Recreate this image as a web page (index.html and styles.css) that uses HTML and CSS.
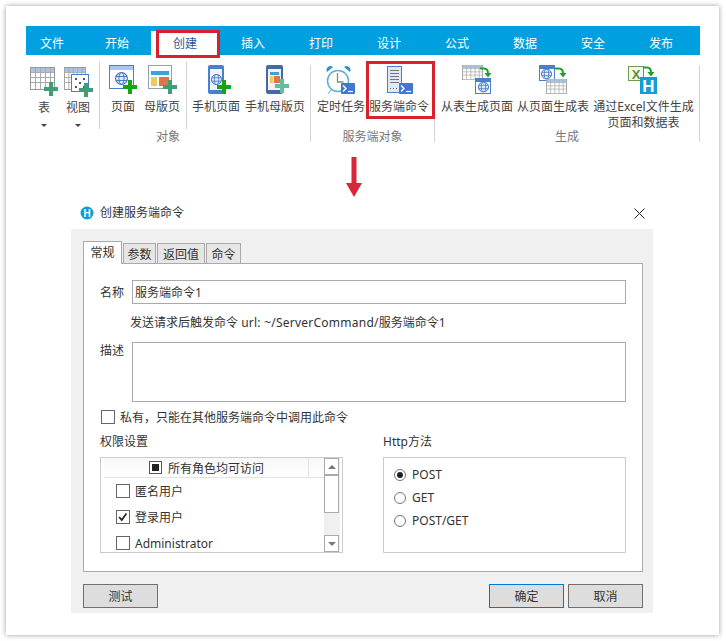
FILE: index.html
```html
<!DOCTYPE html>
<html lang="zh">
<head>
<meta charset="utf-8">
<title>创建服务端命令</title>
<link rel="stylesheet" href="styles.css">
</head>
<body>
<svg class="defs" aria-hidden="true">
  <symbol id="tbl" viewBox="0 0 25 23" preserveAspectRatio="none">
    <rect x=".5" y=".5" width="24" height="22" fill="#fff" stroke="#999"/>
    <rect x="1" y="1" width="23" height="4" fill="#a9c2ea"/>
    <path d="M1 5.500h23M1 10.500h23M1 15.500h23M5.500 1v21M10.500 1v21M15.500 1v21M20.500 1v21" stroke="#aaa" fill="none"/>
  </symbol>
  <symbol id="glob" viewBox="0 0 14 14">
    <circle cx="7" cy="7" r="6.400" fill="#dfe9f9" stroke="#3f73c4" stroke-width="1.200"/>
    <ellipse cx="7" cy="7" rx="2.800" ry="6.400" fill="none" stroke="#3f73c4"/>
    <path d="M1 4.800h12M1 9.200h12" stroke="#3f73c4" fill="none"/>
  </symbol>
  <symbol id="plus" viewBox="0 0 14 14">
    <path d="M5 0h4v5h5v4H9v5H5V9H0V5h5z" fill="currentColor"/>
  </symbol>
  <symbol id="term" viewBox="0 0 14 11">
    <rect width="14" height="11" rx="1" fill="#3f78d2"/>
    <path d="M2 2.500l3 3-3 3" stroke="#fff" stroke-width="1.400" fill="none"/>
    <path d="M7 8.500h5" stroke="#fff" stroke-width="1.200"/>
  </symbol>
</svg>
<main class="frame">
  <section class="ribbon">
    <nav class="tabbar">
      <span class="rtab rtab-first">文件</span>
      <span class="rtab rtab-second">开始</span>
      <span class="rtab rtab-active">创建</span>
      <span class="rtab">插入</span>
      <span class="rtab">打印</span>
      <span class="rtab">设计</span>
      <span class="rtab">公式</span>
      <span class="rtab">数据</span>
      <span class="rtab">安全</span>
      <span class="rtab">发布</span>
    </nav>
    <div class="rbody">
      <div class="group group-a">
        <div class="grow">
          <div class="cluster c-1">
            <div class="item w-36">
              <svg class="ico" viewBox="26 63 36 34" width="36" height="34"><use href="#tbl" x="30" y="67" width="25" height="23"/><use href="#plus" class="p-dark" x="44" y="82" width="14" height="14"/></svg>
              <span class="lbl lbl-low">表</span><i class="caret"></i>
            </div>
            <div class="item w-32">
              <svg class="ico" viewBox="62 63 32 34" width="32" height="34"><use href="#tbl" x="64" y="67" width="22" height="23"/><rect x="71.500" y="74.500" width="17" height="17" fill="#fff" stroke="#4a7fd0"/><path d="M75 78h2v2h-2zM83 78h2v2h-2zM79 82h2v2h-2zM75 86h2v2h-2zM83 86h2v2h-2z" fill="#555"/><use href="#plus" class="p-dark" x="79" y="83" width="14" height="14"/></svg>
              <span class="lbl lbl-low">视图</span><i class="caret"></i>
            </div>
          </div>
          <div class="cluster c-2">
            <div class="item w-46">
              <svg class="ico" viewBox="100 63 46 34" width="46" height="34"><rect x="109.500" y="65.500" width="24" height="23" fill="#fff" stroke="#4a7fd0"/><rect x="110" y="66" width="23" height="4" fill="#a9c6f2"/><use href="#glob" x="115" y="72" width="13" height="13"/><use href="#plus" class="p-bright" x="123" y="80" width="14" height="14"/></svg>
              <span class="lbl">页面</span>
            </div>
            <div class="item w-32">
              <svg class="ico" viewBox="146 63 32 34" width="32" height="34"><rect x="148.500" y="65.500" width="23" height="23" fill="#fff" stroke="#8fa3b8"/><rect x="151" y="71" width="18" height="4" fill="#3aa3dc"/><rect x="151" y="77" width="6" height="9" fill="#f2c95e"/><rect x="159" y="77" width="10" height="9" fill="#e0744a"/><use href="#plus" class="p-dark" x="163" y="80" width="14" height="14"/></svg>
              <span class="lbl">母版页</span>
            </div>
          </div>
          <div class="cluster c-3">
            <div class="item w-58">
              <svg class="ico" viewBox="187 63 58 34" width="58" height="34"><rect x="208" y="65" width="16" height="29" rx="2" fill="#4a7fd0"/><rect x="210" y="69" width="12" height="21" fill="#eef3fb"/><use href="#glob" x="211" y="74" width="11" height="11"/><use href="#plus" class="p-bright" x="217" y="80" width="14" height="14"/></svg>
              <span class="lbl">手机页面</span>
            </div>
            <div class="item w-60">
              <svg class="ico" viewBox="245 63 60 34" width="60" height="34"><rect x="266" y="65" width="17" height="29" rx="2" fill="#4668a8"/><rect x="268" y="69" width="13" height="21" fill="#f3f3f3"/><rect x="270" y="72" width="9" height="3" fill="#3aa3dc"/><rect x="270" y="76" width="3" height="7" fill="#f2c95e"/><rect x="274" y="76" width="6" height="7" fill="#e0744a"/><use href="#plus" class="p-light" x="275" y="79" width="14" height="14"/></svg>
              <span class="lbl">手机母版页</span>
            </div>
          </div>
        </div>
        <div class="gname">对象</div>
      </div>
      <i class="sep"></i>
      <div class="group group-b">
        <div class="grow grow-b">
          <div class="item w-48">
            <svg class="ico" viewBox="317 63 48 34" width="48" height="34"><path d="M327 72a4 4 0 0 1 6-5zM344 67a4 4 0 0 1 6 5z" fill="#2c94c4"/><path d="M331 90l-3 4M345 90l3 4" stroke="#7dbcd8" stroke-width="1.200"/><circle cx="338" cy="81" r="10.500" fill="#fff" stroke="#5eb0d2" stroke-width="1.500"/><path d="M337.500 73v9h6" stroke="#888" stroke-width="1.300" fill="none"/><use href="#term" x="341" y="83" width="14" height="11"/></svg>
            <span class="lbl">定时任务</span>
          </div>
          <div class="item w-60">
            <svg class="ico" viewBox="369 63 60 34" width="60" height="34"><rect x="387.500" y="66.500" width="14" height="26" fill="#dfe8f6" stroke="#4a7fd0"/><path d="M390 70.500h9M390 73.500h9M390 76.500h9M390 79.500h9M390 82.500h9" stroke="#777" fill="none"/><path d="M390 88h1v1h-1zM393 88h1v1h-1zM396 88h1v1h-1z" fill="#666"/><use href="#term" x="399" y="83" width="14" height="11"/></svg>
            <span class="lbl">服务端命令</span>
          </div>
        </div>
        <div class="gname">服务端对象</div>
      </div>
      <i class="sep"></i>
      <div class="group group-c">
        <div class="grow grow-c">
          <div class="item w-72">
            <svg class="ico" viewBox="441 63 72 34" width="72" height="34"><use href="#tbl" x="462" y="65" width="21" height="15"/><path d="M480 68.500h4q4 0 4 5" stroke="#1f9f2a" stroke-width="2" fill="none"/><path d="M484.500 73h7l-3.500 4.500z" fill="#1f9f2a"/><rect x="475" y="78" width="16" height="16" fill="#4a7fd0"/><rect x="476" y="82" width="14" height="11" fill="#fff"/><use href="#glob" x="478" y="81.500" width="11" height="11"/></svg>
            <span class="lbl">从表生成页面</span>
          </div>
          <div class="item w-72">
            <svg class="ico" viewBox="517 63 72 34" width="72" height="34"><rect x="539" y="65" width="16" height="16" fill="#4a7fd0"/><rect x="540" y="69" width="14" height="11" fill="#fff"/><use href="#glob" x="541" y="68.500" width="11" height="11"/><path d="M555 68.500h4q4 0 4 5" stroke="#1f9f2a" stroke-width="2" fill="none"/><path d="M559.500 73h7l-3.500 4.500z" fill="#1f9f2a"/><use href="#tbl" x="546" y="79" width="21" height="15"/></svg>
            <span class="lbl">从页面生成表</span>
          </div>
          <div class="item w-101">
            <svg class="ico" viewBox="593 63 101 34" width="101" height="34"><rect x="628.500" y="66.500" width="15" height="14" fill="#f3f8ee" stroke="#6d9a50"/><text x="636" y="78.500" class="sx">X</text><path d="M643 67.500h4q4 0 4 5" stroke="#1f9f2a" stroke-width="2" fill="none"/><path d="M647.500 72h7l-3.500 4.500z" fill="#1f9f2a"/><rect x="640" y="77" width="17" height="17" fill="#129cdc"/><text x="648.500" y="92" class="sh">H</text></svg>
            <span class="lbl">通过Excel文件生成<br>页面和数据表</span>
          </div>
        </div>
        <div class="gname">生成</div>
      </div>
      <i class="sep"></i>
    </div>
    <div class="callout callout-tab"></div>
    <div class="callout callout-cmd"></div>
  </section>

  <svg class="down" viewBox="0 0 18 41" width="18" height="41"><path d="M6.500 0h5v26H17L9 40 1 26h5.500z" fill="#d8263a"/></svg>

  <section class="dialog">
    <header class="dtitle">
      <svg class="dlogo" viewBox="0 0 14 14" width="14" height="14"><circle cx="7" cy="7" r="6.500" fill="#119bd8"/><text x="7" y="10.500" class="logo-h">H</text></svg>
      <span class="dtext">创建服务端命令</span>
      <svg class="dclose" viewBox="0 0 11 11" width="11" height="11"><path d="M.5.500l10 10M10.500.500l-10 10" stroke="#222" fill="none"/></svg>
    </header>
    <div class="dbody">
      <div class="dtabs">
        <span class="dtab dtab-on">常规</span>
        <span class="dtab w-tab2">参数</span>
        <span class="dtab w-tab3">返回值</span>
        <span class="dtab w-tab4">命令</span>
      </div>
      <div class="panel">
        <div class="frow r-name">
          <label class="flabel">名称</label>
          <div class="input">服务端命令1</div>
        </div>
        <div class="hint">发送请求后触发命令 <span class="latin">url: ~/ServerCommand/</span>服务端命令1</div>
        <div class="frow r-desc">
          <label class="flabel">描述</label>
          <div class="input area"></div>
        </div>
        <div class="private"><i class="cb"></i><span class="tx">私有，只能在其他服务端命令中调用此命令</span></div>
        <div class="cols">
          <div class="col">
            <div class="coltitle">权限设置</div>
            <div class="listbox">
              <div class="listmain">
                <div class="lhead"><i class="cb cb-mixed"></i><span class="tx">所有角色均可访问</span></div>
                <div class="lrow"><i class="cb"></i><span class="tx">匿名用户</span></div>
                <div class="lrow"><i class="cb"><svg viewBox="0 0 14 14" width="12" height="12"><path d="M2.500 7l3 3.500L11 3" stroke="#222" stroke-width="2" fill="none"/></svg></i><span class="tx">登录用户</span></div>
                <div class="lrow"><i class="cb"></i><span class="tx">Administrator</span></div>
              </div>
              <div class="sbar">
                <div class="sbtn"><i class="tri tri-up"></i></div>
                <div class="sthumb"></div>
                <div class="sspace"></div>
                <div class="sbtn"><i class="tri tri-down"></i></div>
              </div>
            </div>
          </div>
          <div class="col">
            <div class="coltitle">Http方法</div>
            <div class="radiobox">
              <div class="radio"><i class="rd rd-on"></i><span>POST</span></div>
              <div class="radio"><i class="rd"></i><span>GET</span></div>
              <div class="radio"><i class="rd"></i><span>POST/GET</span></div>
            </div>
          </div>
        </div>
      </div>
      <div class="actions">
        <button class="btn">测试</button>
        <span class="spacer"></span>
        <button class="btn btn-primary">确定</button>
        <button class="btn">取消</button>
      </div>
    </div>
  </section>
</main>
</body>
</html>
```
FILE: styles.css
```css
* { box-sizing: border-box; }
html, body { margin: 0; padding: 0; background: #fff; }
body {
  width: 726px;
  height: 641px;
  overflow: hidden;
  font-family: "Noto Sans", "Noto Sans CJK SC", sans-serif;
  font-size: 12px;
  line-height: 16px;
  color: #333;
}
.defs { position: absolute; width: 0; height: 0; }
.frame {
  margin: 6px;
  width: 713px;
  height: 629px;
  padding: 20px;
  background: #fff;
  box-shadow: 0 0 5px rgba(0, 0, 0, .4);
}

/* ribbon */
.ribbon { position: relative; width: 674px; height: 117px; }
.tabbar { display: flex; height: 29px; background: #009fdf; }
.rtab {
  width: 68px;
  padding-top: 6px;
  line-height: 23px;
  text-align: center;
  color: #fff;
}
.rtab-first { width: 52px; }
.rtab-second { width: 73px; padding-left: 5px; }
.rtab-active {
  margin-top: 5px;
  padding-top: 1px;
  background: #fff;
  color: #2f5597;
}
.rbody { display: flex; height: 88px; color: #444; }
.group { display: flex; flex-direction: column; }
.group-a { width: 284px; }
.group-b { width: 123px; }
.group-c { width: 264px; }
.sep {
  flex: none;
  width: 1px;
  height: 77px;
  margin-top: 10px;
  background: #d4d4d4;
}
.grow { flex: none; display: flex; height: 67px; margin-top: 7px; padding-top: 1px; }
.grow-b, .grow-c { padding-left: 6px; gap: 4px; }
.cluster { display: flex; margin-top: -1px; padding-top: 1px; }
.c-1 { width: 73px; }
.c-2 { width: 87px; border-left: 1px solid #d4d4d4; }
.c-3 { width: 124px; border-left: 1px solid #d4d4d4; }
.item { display: flex; flex-direction: column; align-items: center; white-space: nowrap; text-align: center; }
.w-32 { width: 32px; }
.w-36 { width: 36px; }
.w-46 { width: 46px; }
.w-48 { width: 48px; }
.w-58 { width: 58px; }
.w-60 { width: 60px; }
.w-72 { width: 72px; }
.w-101 { width: 101px; }
.ico { display: block; flex: none; }
.lbl { margin-top: 2px; }
.lbl-low { margin-top: 3px; }
.caret {
  width: 0;
  height: 0;
  margin-top: 8px;
  border-left: 3px solid transparent;
  border-right: 3px solid transparent;
  border-top: 3px solid #444;
}
.gname { flex: none; height: 16px; text-align: center; color: #777; }
.p-dark { color: #3f9d78; }
.p-bright { color: #16a516; }
.p-light { color: #62bf9c; }
.sx { font: bold 13px "Liberation Sans", sans-serif; fill: #5f8f3c; text-anchor: middle; }
.sh { font: bold 17px "Liberation Sans", sans-serif; fill: #fff; text-anchor: middle; }
.logo-h { font: bold 10px "Liberation Sans", sans-serif; fill: #fff; text-anchor: middle; }
.callout { position: absolute; border: 3px solid #d8202f; }
.callout-tab { left: 130px; top: 4px; width: 64px; height: 28px; }
.callout-cmd { left: 340px; top: 35px; width: 69px; height: 58px; }

.down { display: block; margin: 14px 0 7px 319px; }

/* dialog */
.dialog { margin-left: 45px; width: 582px; }
.dtitle { display: flex; align-items: center; height: 24px; padding: 0 8px 8px 9px; }
.dlogo { flex: none; }
.dtext { margin-left: 6px; color: #333; }
.dclose { margin-left: auto; }
.dbody { height: 384px; padding: 12px 10px 0 12px; background: #f0f0f0; }
.dtabs { display: flex; align-items: flex-end; height: 22px; gap: 1px; }
.dtab {
  height: 20px;
  line-height: 21px;
  text-align: center;
  background: #e6e6e6;
  border: 1px solid #aaa;
  border-bottom: 0;
}
.dtab-on {
  width: 39px;
  height: 23px;
  line-height: 22px;
  margin-bottom: -1px;
  position: relative;
  background: #fff;
}
.w-tab2 { width: 33px; }
.w-tab3 { width: 48px; }
.w-tab4 { width: 35px; }
.panel {
  width: 560px;
  height: 309px;
  background: #fff;
  border: 1px solid #aaa;
}
.frow { display: flex; padding-left: 16px; }
.r-name { margin-top: 16px; align-items: center; }
.r-desc { margin-top: 11px; }
.flabel { width: 32px; padding-top: 1px; color: #333; }
.r-name .flabel { padding-top: 2px; }
.input {
  width: 494px;
  height: 24px;
  padding: 0 2px;
  line-height: 24px;
  border: 1px solid #aaa;
  background: #fff;
}
.area { height: 60px; }
.hint { margin-top: 11px; padding-left: 46px; }
.latin { letter-spacing: .24px; }
.private { display: flex; align-items: center; gap: 5px; margin-top: 7px; padding-left: 17px; height: 16px; }
.tx { padding-top: 2px; }
.cb {
  flex: none;
  display: flex;
  align-items: center;
  justify-content: center;
  width: 14px;
  height: 14px;
  border: 1px solid #666;
  background: #fff;
}
.cb-mixed { width: 13px; height: 13px; border-color: #555; }
.cb-mixed::before { content: ""; width: 7px; height: 7px; background: #222; }
.cols { display: flex; gap: 40px; margin-top: 8px; padding-left: 16px; }
.col { width: 243px; }
.coltitle { height: 17px; padding-top: 1px; margin-bottom: 7px; }
.listbox {
  display: flex;
  height: 96px;
  overflow: hidden;
  border: 1px solid #ccc;
  padding-right: 2px;
}
.listmain { width: 223px; padding-left: 3px; }
.lhead {
  display: flex;
  align-items: center;
  gap: 6px;
  height: 20px;
  padding-left: 45px;
  background: linear-gradient(#f7f7f7, #fff);
  border-bottom: 1px solid #e3e3e3;
  position: relative;
}
.lhead::after {
  content: "";
  position: absolute;
  left: 204px;
  top: 0;
  width: 1px;
  height: 19px;
  background: #e3e3e3;
}
.lrow { display: flex; align-items: center; gap: 5px; height: 26px; padding-left: 12px; }
.sbar { width: 16px; display: flex; flex-direction: column; background: #f0f0f0; }
.sbtn {
  flex: none;
  display: flex;
  align-items: center;
  justify-content: center;
  width: 15px;
  height: 17px;
  background: #fff;
  border: 1px solid #aaa;
}
.sthumb { flex: none; width: 15px; height: 38px; background: #fff; border: 1px solid #aaa; }
.sspace { flex: 1; }
.tri { width: 0; height: 0; border-left: 4px solid transparent; border-right: 4px solid transparent; }
.tri-up { border-bottom: 4px solid #777; }
.tri-down { border-top: 4px solid #777; }
.radiobox {
  height: 96px;
  padding: 5px 10px;
  border: 1px solid #ccc;
  background: #fff;
}
.radio { display: flex; align-items: center; gap: 6px; height: 23px; }
.rd {
  flex: none;
  display: flex;
  align-items: center;
  justify-content: center;
  width: 12px;
  height: 12px;
  border: 1px solid #777;
  border-radius: 50%;
  background: #fff;
}
.rd-on::before { content: ""; width: 6px; height: 6px; border-radius: 50%; background: #222; }
.actions { display: flex; gap: 4px; margin-top: 12px; }
.spacer { flex: 1; }
.btn {
  width: 75px;
  height: 24px;
  padding: 2px 0 0;
  font: inherit;
  color: #333;
  background: #ddd;
  border: 1px solid #707070;
}
.btn-primary { border-color: #0078d7; }
```
